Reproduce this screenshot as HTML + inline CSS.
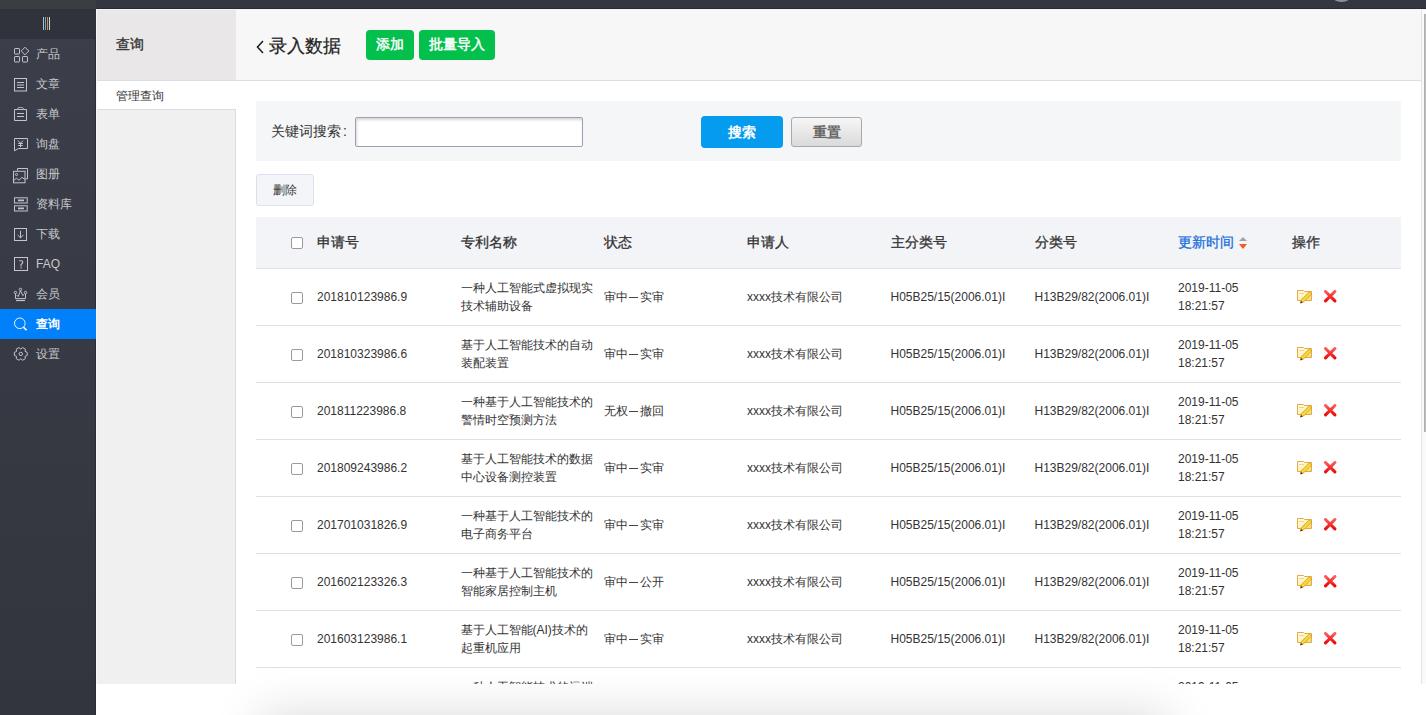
<!DOCTYPE html>
<html><head><meta charset="utf-8">
<style>
*{margin:0;padding:0;box-sizing:border-box}
html,body{width:1426px;height:715px;overflow:hidden;background:#fff;font-family:"Liberation Sans",sans-serif;color:#333}
.abs{position:absolute}
#topbar{left:0;top:0;width:1426px;height:9px;background:#343741}
#topbar .lt{left:0;top:0;width:96px;height:9px;background:#3a3d42}
#avatar{left:1328px;top:-25px;width:27px;height:27.3px;border-radius:50%;background:#8e9094}
#side{left:0;top:9px;width:96px;height:706px;background:linear-gradient(#3c3f4a,#32353d)}
.bars{left:43px;top:8px;width:7px;height:13px;background:linear-gradient(90deg,#a9c3cc 0,#a9c3cc 1px,transparent 1px,transparent 2px,#6aa5cc 2px,#6aa5cc 3px,transparent 3px,transparent 4px,#c19060 4px,#c19060 5px,transparent 5px,transparent 6px,#d9d9c0 6px,#d9d9c0 7px)}
#side .tz{left:0;top:0;width:96px;height:30px;background:#30333b}
.mi{position:absolute;left:0;width:96px;height:30px;font-size:12px;color:#c9c9cd;line-height:30px}
.mi span{position:absolute;left:36px;top:0}
.mi svg{position:absolute;left:13px;top:8px}
.mi.act{background:#0080fb;color:#fff;font-weight:bold}
#sub{left:96px;top:9px;width:140px;height:675px;background:#f0f0f0;border-right:1px solid #dcdde3;z-index:1}
#sub .hd{left:0;top:0;width:140px;height:72px;background:#e9e7e7;border-bottom:1px solid #dcdee5;font-size:14px;line-height:71px;padding-left:20px;color:#333;-webkit-text-stroke:.35px #333}
#sub .it{left:0;top:72px;width:140px;height:29px;background:#fff;font-size:12px;line-height:31px;padding-left:20px;border-bottom:1px solid #dcdde3;color:#333}
#collapse{left:211px;top:347px;width:24px;height:26px;background:#f7f7f7;border:1px solid #cacaca;border-radius:4px}
#main{left:236px;top:9px;width:1185px;height:675px;background:#fff;overflow:hidden}
#hdr{left:0;top:0;width:1185px;height:72px;background:#f7f7f7;border-bottom:1px solid #dcdee5}
#title{left:20px;top:24px;font-size:18px;line-height:26px;color:#222;-webkit-text-stroke:.25px #222}
.gbtn{position:absolute;top:21px;height:30px;background:#03bf4c;border-radius:4px;color:#fff;font-size:14px;line-height:29px;text-align:center;-webkit-text-stroke:.45px #fff}
#sbar{left:20px;top:92px;width:1145px;height:60px;background:#f5f6f8}
#slabel{left:15px;top:20px;font-size:14px;line-height:20px;color:#333}
#sinput{left:99px;top:16px;width:228px;height:30px;background:#fff;border:1px solid #a29db4;border-radius:2px;box-shadow:inset 1px 2px 3px rgba(0,0,0,.16)}
#sbtn{left:445px;top:15px;width:82px;height:32px;background:#059bef;border-radius:4px;color:#fff;font-size:14px;font-weight:bold;line-height:32px;text-align:center}
#rbtn{left:535px;top:16px;width:71px;height:30px;background:linear-gradient(#f6f6f6,#dadada);border:1px solid #a9a9a9;border-radius:3px;color:#666;font-size:14px;font-weight:bold;line-height:28px;text-align:center}
#del{left:20px;top:165px;width:58px;height:32px;background:#f3f5f9;border:1px solid #d8e2ee;border-radius:3px;font-size:12px;line-height:30px;text-align:center;color:#333}
#thead{left:20px;top:208px;width:1145px;height:51px;background:#f3f4f8;border-bottom:1px solid #dfe0e3}
.th{position:absolute;top:0;line-height:51px;font-size:14px;color:#333;-webkit-text-stroke:.3px currentColor}
.cb{position:absolute;width:12px;height:12px;border:1px solid #9a9a9a;border-radius:2px;background:#fff}
.row{position:absolute;left:20px;width:1145px;height:57px;border-bottom:1px solid #e0e0e0}
.td{position:absolute;font-size:12px;color:#333;line-height:18px}

#thead{height:52px !important}
.td.s1{top:19px}
.td.s2{top:10px}
.sort{position:absolute;width:8px;height:13px}
.sort .up{position:absolute;left:0;top:0;width:0;height:0;border-left:4px solid transparent;border-right:4px solid transparent;border-bottom:4px solid #a3a3a3}
.sort .dn{position:absolute;left:0;top:7px;width:0;height:0;border-left:4px solid transparent;border-right:4px solid transparent;border-top:5px solid #f45b1f}
.ed,.dx{position:absolute}
.ed svg,.dx svg{display:block}
#scroll{left:1421px;top:9px;width:5px;height:675px;background:#fafafa;border-left:1px solid #e3e3e3}
#thumb{left:1424px;top:14px;width:2px;height:418px;background:linear-gradient(90deg,#a8a8a8,#c4c4c4)}
#bottom{left:96px;top:684px;width:1330px;height:31px;background:#fff;overflow:hidden}
#shadow{left:290px;top:745px;width:848px;height:60px;box-shadow:0 0 50px 30px rgba(0,0,0,.15);z-index:5}
.dash{display:inline-block;width:12px;height:18px;vertical-align:top;position:relative}.dash:after{content:"";position:absolute;left:1.5px;top:9px;width:9px;height:1px;background:#444}
</style></head><body>
<svg width="0" height="0" style="position:absolute"><defs>
<linearGradient id="fg" x1="0" y1="0" x2="1" y2="1"><stop offset="0" stop-color="#fffef5"/><stop offset=".5" stop-color="#fdf2c0"/><stop offset="1" stop-color="#f5d560"/></linearGradient>
<g id="edit"><path d="M.5 .5H6.5L7.5 1.5H14.5V10.5H.5Z" fill="url(#fg)" stroke="#e3ab40"/><path d="M2 3.5h5" stroke="#f3c850" stroke-width="1" opacity=".7"/><path d="M3.6 12.6L4.6 9.6 12.4 1.8 14.6 4 6.8 11.8Z" fill="#f5da3c" stroke="#d8901c" stroke-width=".8"/><path d="M3.2 13.5L3.9 11 5.9 12.6Z" fill="#5a2210"/></g>
<linearGradient id="xg" x1="0" y1="0" x2="0" y2="1"><stop offset="0" stop-color="#ff5a5a"/><stop offset="1" stop-color="#ee0a0a"/></linearGradient><g id="xic"><path d="M1.5 1.5L10.9 10.9M10.9 1.5L1.5 10.9" stroke="url(#xg)" stroke-width="3" stroke-linecap="round"/></g>
</defs></svg>
<div id="topbar" class="abs"><div class="lt abs"></div><div class="abs" style="left:96px;top:8px;width:1330px;height:1px;background:#282a32"></div><div id="avatar" class="abs"></div></div>
<div id="side" class="abs">
  <div class="abs" style="left:95px;top:0;width:1px;height:706px;background:#2b2d35"></div>
  <div class="tz abs"><div class="bars abs"></div></div>
<div class="mi" style="top:30px"><svg width="16" height="16" viewBox="0 0 16 16" fill="none" stroke="#c4c4ca" style="overflow:visible"><rect x="1.5" y="1.5" width="5" height="5.5" rx=".6"/><rect x="1.5" y="9.5" width="5" height="5.5" rx=".6"/><rect x="9.5" y="9.5" width="5" height="5.5" rx=".6"/><path d="M12 .2L15.8 4 12 7.8 8.2 4Z" stroke-linejoin="round"/></svg><span>产品</span></div>
<div class="mi" style="top:60px"><svg width="16" height="16" viewBox="0 0 16 16" fill="none" stroke="#c4c4ca" style="overflow:visible"><rect x="1.5" y="1.5" width="12" height="12.5"/><path d="M4 5.5h7M4 8h7M4 10.5h7"/></svg><span>文章</span></div>
<div class="mi" style="top:90px"><svg width="16" height="16" viewBox="0 0 16 16" fill="none" stroke="#c4c4ca" style="overflow:visible"><path d="M4.3 2.5H1.5v11h12v-11h-3"/><path d="M4.5 2.5C4.6 .4 5.8 .5 7.5 .5S10.4 .4 10.5 2.5Z"/><path d="M4 6.5h7M4 9.5h7"/></svg><span>表单</span></div>
<div class="mi" style="top:120px"><svg width="16" height="16" viewBox="0 0 16 16" fill="none" stroke="#c4c4ca" style="overflow:visible"><path d="M5.5 11.5H14.5V1.5H1.5V13.8Z" stroke-linejoin="round"/><path d="M5 3.6l2.5 2.6 2.5-2.6M7.5 6.2v4M5.2 6.5h4.6M5.2 8.5h4.6"/></svg><span>询盘</span></div>
<div class="mi" style="top:150px"><svg width="16" height="16" viewBox="0 0 16 16" fill="none" stroke="#c4c4ca" style="overflow:visible"><path d="M4.5 3.8V1.5h10v10.3h-2.2"/><rect x=".5" y="4.3" width="11.5" height="11.5"/><circle cx="3.5" cy="7.5" r="1.1"/><path d="M.5 13.8l2.8-2.6 2.6 2 3-2.8 3 2"/></svg><span>图册</span></div>
<div class="mi" style="top:180px"><svg width="16" height="16" viewBox="0 0 16 16" fill="none" stroke="#c4c4ca" style="overflow:visible"><rect x="1.5" y=".8" width="12.7" height="5.2"/><rect x="1.5" y="8.8" width="12.7" height="5.2"/><path d="M5 3.4h6M5 11.4h6" stroke-width="1.6"/></svg><span>资料库</span></div>
<div class="mi" style="top:210px"><svg width="16" height="16" viewBox="0 0 16 16" fill="none" stroke="#c4c4ca" style="overflow:visible"><rect x="1.5" y="1.5" width="12" height="12"/><path d="M7.5 3.8v7M4.6 8l2.9 2.9L10.4 8"/></svg><span>下载</span></div>
<div class="mi" style="top:240px"><svg width="16" height="16" viewBox="0 0 16 16" fill="none" stroke="#c4c4ca" style="overflow:visible"><rect x="1.5" y=".5" width="13" height="13"/><path d="M6.2 3.8h1.9c1.1 0 1.7.6 1.7 1.5 0 .8-.5 1.2-1.2 1.7-.5.4-.7.8-.7 1.5v.9" stroke-width="1.1"/><rect x="7.5" y="10.2" width="1.2" height="1.2" fill="#c4c4ca" stroke="none"/></svg><span>FAQ</span></div>
<div class="mi" style="top:270px"><svg width="16" height="16" viewBox="0 0 16 16" fill="none" stroke="#c4c4ca" style="overflow:visible"><circle cx="2.4" cy="5.5" r="1.2"/><circle cx="7.5" cy="2.4" r="1.2"/><circle cx="12.5" cy="5.5" r="1.2"/><path d="M2.5 6.7v4.9h10V6.7M3.6 8l1.6 1.6L7.5 3.6l2.3 5 1.5-1.4"/><path d="M3 13.5h9" stroke-width="1.2"/></svg><span>会员</span></div>
<div class="mi act" style="top:300px"><svg width="16" height="16" viewBox="0 0 16 16" fill="none" stroke="#c4c4ca" style="overflow:visible"><circle cx="6.8" cy="6.3" r="5.3" stroke="#fff" stroke-opacity=".92"/><path d="M10.6 10.2l3 3" stroke="#fff" stroke-width="1.6"/></svg><span>查询</span></div>
<div class="mi" style="top:330px"><svg width="16" height="16" viewBox="0 0 16 16" fill="none" stroke="#c4c4ca" style="overflow:visible"><path d="M12.04 9.35 L14.20 8.50 L14.20 5.30 L12.04 4.45 L12.38 2.15 L9.62 0.56 L7.80 2.00 L5.98 0.56 L3.22 2.15 L3.56 4.45 L1.40 5.30 L1.40 8.50 L3.56 9.35 L3.22 11.65 L5.98 13.24 L7.80 11.80 L9.62 13.24 L12.38 11.65Z" stroke-linejoin="round"/><circle cx="7.8" cy="6.9" r="1.7"/></svg><span>设置</span></div>
</div>
<div id="sub" class="abs">
  <div class="hd abs">查询</div>
  <div class="it abs">管理查询</div>
</div>
<div id="collapse" class="abs"><svg width="24" height="24" viewBox="0 0 24 24" style="position:absolute;left:0;top:0"><path d="M4 7h14M9 10h9M9 13h9M4 16h14" stroke="#9a9a9a" stroke-width="2"/><path d="M4 11.5l3-2.5v5z" fill="#9a9a9a"/></svg></div>
<div id="main" class="abs">
  <div id="hdr" class="abs">
    <div id="title" class="abs"><svg width="9" height="14" viewBox="0 0 9 14" style="position:absolute;left:0;top:7px"><path d="M7 1L1.5 7 7 13" fill="none" stroke="#222" stroke-width="1.6"/></svg><span style="position:absolute;left:13px;top:0;white-space:nowrap">录入数据</span></div>
    <div class="gbtn" style="left:130px;width:48px">添加</div>
    <div class="gbtn" style="left:183px;width:76px">批量导入</div>
  </div>
  <div id="sbar" class="abs">
    <div id="slabel" class="abs">关键词搜索<span style="position:absolute;left:72px;top:0">:</span></div>
    <div id="sinput" class="abs"></div>
    <div id="sbtn" class="abs">搜索</div>
    <div id="rbtn" class="abs">重置</div>
  </div>
  <div id="del" class="abs">删除</div>
<!--TBL-->
  <div id="thead" class="abs">
<div class="cb" style="left:35px;top:20px"></div>
<div class="th" style="left:61px">申请号</div>
<div class="th" style="left:204.5px">专利名称</div>
<div class="th" style="left:347.5px">状态</div>
<div class="th" style="left:491px">申请人</div>
<div class="th" style="left:634.5px">主分类号</div>
<div class="th" style="left:778.5px">分类号</div>
<div class="th" style="left:922px;color:#1d6fdc">更新时间</div>
<div class="sort" style="left:983px;top:20px"><i class="up"></i><i class="dn"></i></div>
<div class="th" style="left:1036px">操作</div>
  </div>
  <div id="rows">
<div class="row" style="top:260px">
<div class="cb" style="left:35px;top:23px"></div>
<div class="td s1" style="left:61px">201810123986.9</div>
<div class="td s2" style="left:204.5px">一种人工智能式虚拟现实<br>技术辅助设备</div>
<div class="td s1" style="left:347.5px">审中<i class="dash"></i>实审</div>
<div class="td s1" style="left:491px">xxxx技术有限公司</div>
<div class="td s1" style="left:634.5px">H05B25/15(2006.01)I</div>
<div class="td s1" style="left:778.5px">H13B29/82(2006.01)I</div>
<div class="td s2" style="left:922px">2019-11-05<br>18:21:57</div>
<div class="ed" style="left:1041px;top:21px"><svg width="16" height="14" viewBox="0 0 16 14"><use href="#edit"/></svg></div>
<div class="dx" style="left:1068px;top:21px"><svg width="13" height="13" viewBox="0 0 13 13"><use href="#xic"/></svg></div>
</div>
<div class="row" style="top:317px">
<div class="cb" style="left:35px;top:23px"></div>
<div class="td s1" style="left:61px">201810323986.6</div>
<div class="td s2" style="left:204.5px">基于人工智能技术的自动<br>装配装置</div>
<div class="td s1" style="left:347.5px">审中<i class="dash"></i>实审</div>
<div class="td s1" style="left:491px">xxxx技术有限公司</div>
<div class="td s1" style="left:634.5px">H05B25/15(2006.01)I</div>
<div class="td s1" style="left:778.5px">H13B29/82(2006.01)I</div>
<div class="td s2" style="left:922px">2019-11-05<br>18:21:57</div>
<div class="ed" style="left:1041px;top:21px"><svg width="16" height="14" viewBox="0 0 16 14"><use href="#edit"/></svg></div>
<div class="dx" style="left:1068px;top:21px"><svg width="13" height="13" viewBox="0 0 13 13"><use href="#xic"/></svg></div>
</div>
<div class="row" style="top:374px">
<div class="cb" style="left:35px;top:23px"></div>
<div class="td s1" style="left:61px">201811223986.8</div>
<div class="td s2" style="left:204.5px">一种基于人工智能技术的<br>警情时空预测方法</div>
<div class="td s1" style="left:347.5px">无权<i class="dash"></i>撤回</div>
<div class="td s1" style="left:491px">xxxx技术有限公司</div>
<div class="td s1" style="left:634.5px">H05B25/15(2006.01)I</div>
<div class="td s1" style="left:778.5px">H13B29/82(2006.01)I</div>
<div class="td s2" style="left:922px">2019-11-05<br>18:21:57</div>
<div class="ed" style="left:1041px;top:21px"><svg width="16" height="14" viewBox="0 0 16 14"><use href="#edit"/></svg></div>
<div class="dx" style="left:1068px;top:21px"><svg width="13" height="13" viewBox="0 0 13 13"><use href="#xic"/></svg></div>
</div>
<div class="row" style="top:431px">
<div class="cb" style="left:35px;top:23px"></div>
<div class="td s1" style="left:61px">201809243986.2</div>
<div class="td s2" style="left:204.5px">基于人工智能技术的数据<br>中心设备测控装置</div>
<div class="td s1" style="left:347.5px">审中<i class="dash"></i>实审</div>
<div class="td s1" style="left:491px">xxxx技术有限公司</div>
<div class="td s1" style="left:634.5px">H05B25/15(2006.01)I</div>
<div class="td s1" style="left:778.5px">H13B29/82(2006.01)I</div>
<div class="td s2" style="left:922px">2019-11-05<br>18:21:57</div>
<div class="ed" style="left:1041px;top:21px"><svg width="16" height="14" viewBox="0 0 16 14"><use href="#edit"/></svg></div>
<div class="dx" style="left:1068px;top:21px"><svg width="13" height="13" viewBox="0 0 13 13"><use href="#xic"/></svg></div>
</div>
<div class="row" style="top:488px">
<div class="cb" style="left:35px;top:23px"></div>
<div class="td s1" style="left:61px">201701031826.9</div>
<div class="td s2" style="left:204.5px">一种基于人工智能技术的<br>电子商务平台</div>
<div class="td s1" style="left:347.5px">审中<i class="dash"></i>实审</div>
<div class="td s1" style="left:491px">xxxx技术有限公司</div>
<div class="td s1" style="left:634.5px">H05B25/15(2006.01)I</div>
<div class="td s1" style="left:778.5px">H13B29/82(2006.01)I</div>
<div class="td s2" style="left:922px">2019-11-05<br>18:21:57</div>
<div class="ed" style="left:1041px;top:21px"><svg width="16" height="14" viewBox="0 0 16 14"><use href="#edit"/></svg></div>
<div class="dx" style="left:1068px;top:21px"><svg width="13" height="13" viewBox="0 0 13 13"><use href="#xic"/></svg></div>
</div>
<div class="row" style="top:545px">
<div class="cb" style="left:35px;top:23px"></div>
<div class="td s1" style="left:61px">201602123326.3</div>
<div class="td s2" style="left:204.5px">一种基于人工智能技术的<br>智能家居控制主机</div>
<div class="td s1" style="left:347.5px">审中<i class="dash"></i>公开</div>
<div class="td s1" style="left:491px">xxxx技术有限公司</div>
<div class="td s1" style="left:634.5px">H05B25/15(2006.01)I</div>
<div class="td s1" style="left:778.5px">H13B29/82(2006.01)I</div>
<div class="td s2" style="left:922px">2019-11-05<br>18:21:57</div>
<div class="ed" style="left:1041px;top:21px"><svg width="16" height="14" viewBox="0 0 16 14"><use href="#edit"/></svg></div>
<div class="dx" style="left:1068px;top:21px"><svg width="13" height="13" viewBox="0 0 13 13"><use href="#xic"/></svg></div>
</div>
<div class="row" style="top:602px">
<div class="cb" style="left:35px;top:23px"></div>
<div class="td s1" style="left:61px">201603123986.1</div>
<div class="td s2" style="left:204.5px">基于人工智能(AI)技术的<br>起重机应用</div>
<div class="td s1" style="left:347.5px">审中<i class="dash"></i>实审</div>
<div class="td s1" style="left:491px">xxxx技术有限公司</div>
<div class="td s1" style="left:634.5px">H05B25/15(2006.01)I</div>
<div class="td s1" style="left:778.5px">H13B29/82(2006.01)I</div>
<div class="td s2" style="left:922px">2019-11-05<br>18:21:57</div>
<div class="ed" style="left:1041px;top:21px"><svg width="16" height="14" viewBox="0 0 16 14"><use href="#edit"/></svg></div>
<div class="dx" style="left:1068px;top:21px"><svg width="13" height="13" viewBox="0 0 13 13"><use href="#xic"/></svg></div>
</div>
<div class="row" style="top:659px">
<div class="cb" style="left:35px;top:23px"></div>
<div class="td s1" style="left:61px">201605123986.5</div>
<div class="td s2" style="left:204.5px">一种人工智能技术的远端<br>监控方法</div>
<div class="td s1" style="left:347.5px">审中<i class="dash"></i>实审</div>
<div class="td s1" style="left:491px">xxxx技术有限公司</div>
<div class="td s1" style="left:634.5px">H05B25/15(2006.01)I</div>
<div class="td s1" style="left:778.5px">H13B29/82(2006.01)I</div>
<div class="td s2" style="left:922px">2019-11-05<br>18:21:57</div>
<div class="ed" style="left:1041px;top:21px"><svg width="16" height="14" viewBox="0 0 16 14"><use href="#edit"/></svg></div>
<div class="dx" style="left:1068px;top:21px"><svg width="13" height="13" viewBox="0 0 13 13"><use href="#xic"/></svg></div>
</div>
  </div>
<!--/TBL-->
</div>
<div id="scroll" class="abs"></div><div id="thumb" class="abs"></div>
<div id="bottom" class="abs"></div><div id="shadow" class="abs"></div>
<div class="abs" style="left:96px;top:9px;width:1330px;height:1px;background:#f4f3f3;z-index:2"></div><div class="abs" style="left:96px;top:9px;width:1px;height:675px;background:#f6f6f6;z-index:2"></div>
</body></html>
